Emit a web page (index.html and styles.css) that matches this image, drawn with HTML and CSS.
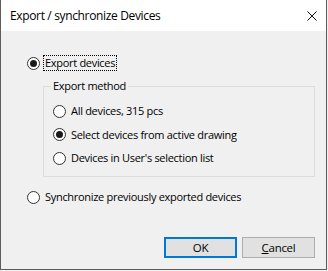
FILE: index.html
```html
<!DOCTYPE html>
<html lang="en">
<head>
    <meta charset="UTF-8">
    <title>Export / synchronize Devices</title>
    <link rel="stylesheet" href="styles.css">
</head>
<body>
    <div class="dialog">
        <div class="title-bar">
            <span class="title">Export / synchronize Devices</span>
            <svg class="close" width="10" height="10" viewBox="0 0 10 10">
                <path d="M0.5 0.5 L9.5 9.5 M9.5 0.5 L0.5 9.5" stroke="#111" stroke-width="1" fill="none"/>
            </svg>
        </div>
        <div class="content">
            <div class="option">
                <span class="radio checked"></span>
                <span class="label focused">Export devices</span>
            </div>

            <fieldset class="group">
                <legend>Export method</legend>
                <div class="group-rows">
                    <div class="option">
                        <span class="radio"></span>
                        <span class="label">All devices, 315 pcs</span>
                    </div>
                    <div class="option">
                        <span class="radio checked"></span>
                        <span class="label">Select devices from active drawing</span>
                    </div>
                    <div class="option">
                        <span class="radio"></span>
                        <span class="label">Devices in User's selection list</span>
                    </div>
                </div>
            </fieldset>

            <div class="option sync">
                <span class="radio"></span>
                <span class="label">Synchronize previously exported devices</span>
            </div>

            <div class="buttons">
                <button class="btn default">OK</button>
                <button class="btn"><u>C</u>ancel</button>
            </div>
        </div>
    </div>
</body>
</html>
```

FILE: styles.css
```css
body {
    margin: 0;
    padding: 0;
    background: #f0f0f0;
    font-family: "Open Sans", "Noto Sans", sans-serif;
    font-size: 11px;
    letter-spacing: -0.3px;
    color: #000;
}

.dialog {
    width: 327px;
    height: 270px;
    box-sizing: border-box;
    border: 1px solid #5c5c5c;
    border-top: none;
    display: flex;
    flex-direction: column;
    background: #f0f0f0;
}

.title-bar {
    height: 31px;
    flex-shrink: 0;
    background: #fff;
    display: flex;
    align-items: center;
    justify-content: space-between;
    padding: 0 9px 0 9px;
}

.title {
    font-size: 12px;
    line-height: 16px;
    letter-spacing: -0.35px;
}

.close {
    display: block;
}

.content {
    flex: 1;
    display: flex;
    flex-direction: column;
    padding: 24px 11px 11px 26px;
}

.option {
    display: flex;
    align-items: center;
    height: 16px;
    gap: 3px;
}

.radio {
    width: 13px;
    height: 13px;
    box-sizing: border-box;
    border: 1px solid #333;
    border-radius: 50%;
    background: #fff;
    display: flex;
    align-items: center;
    justify-content: center;
    flex-shrink: 0;
}

.radio.checked::after {
    content: "";
    width: 7px;
    height: 7px;
    border-radius: 50%;
    background: #1a1a1a;
}

.label {
    line-height: 14px;
    padding: 0 1px;
    border: 1px dotted transparent;
    white-space: nowrap;
}

.label.focused {
    border-color: #000;
}

.group {
    margin: 8px 0 0 16px;
    padding: 0 9px 10px 9px;
    border: 1px solid #dcdcdc;
    min-width: 0;
}

.group legend {
    padding: 0 2px;
    margin-left: -2px;
    line-height: 14px;
}

.group-rows {
    display: flex;
    flex-direction: column;
    gap: 7.5px;
    padding-top: 10px;
}

.sync {
    margin-top: 12px;
}

.buttons {
    margin-top: auto;
    display: flex;
    justify-content: flex-end;
    gap: 5px;
}

.btn {
    width: 73px;
    height: 21px;
    box-sizing: border-box;
    border: 1px solid #adadad;
    background: #e1e1e1;
    font-family: inherit;
    font-size: 11.5px;
    letter-spacing: inherit;
    color: #000;
    padding: 0;
}

.btn.default {
    border: 2px solid #0078d7;
}
```
